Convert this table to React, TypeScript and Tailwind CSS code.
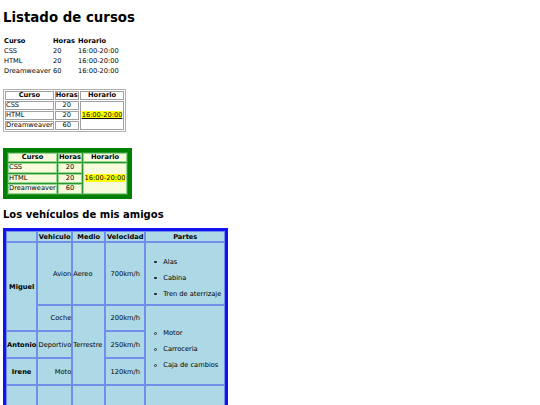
const cursos = [
  { curso: "CSS", horas: 20 },
  { curso: "HTML", horas: 20 },
  { curso: "Dreamweaver", horas: 60 },
]

function PlainTable() {
  return (
    <table className="mt-0 border-separate border-spacing-[1px]">
      <thead>
        <tr className="leading-[9px]">
          <th className="w-[48px] p-0 text-left font-bold">Curso</th>
          <th className="w-[24px] p-0 text-left font-bold">Horas</th>
          <th className="p-0 text-left font-bold">Horario</th>
        </tr>
      </thead>
      <tbody>
        {cursos.map((c) => (
          <tr key={c.curso} className="leading-[9px]">
            <td className="p-0">{c.curso}</td>
            <td className="p-0">{c.horas}</td>
            <td className="p-0">16:00-20:00</td>
          </tr>
        ))}
      </tbody>
    </table>
  )
}

function BorderedTable() {
  return (
    <table className="mt-[12px] border-separate border-spacing-[1px] border border-[#b0b0b0] leading-[7px]">
      <thead>
        <tr>
          <th className="border border-[#a0a0a0] px-[1px] py-0 text-center font-bold">Curso</th>
          <th className="border border-[#a0a0a0] px-[0px] py-0 text-center font-bold">Horas</th>
          <th className="border border-[#a0a0a0] px-[1px] py-0 text-center font-bold">Horario</th>
        </tr>
      </thead>
      <tbody>
        {cursos.map((c, i) => (
          <tr key={c.curso}>
            <td className="border border-[#a0a0a0] px-0 py-0">{c.curso}</td>
            <td className="border border-[#a0a0a0] px-0 py-0 text-center">{c.horas}</td>
            {i === 0 && (
              <td rowSpan={3} className="border border-[#a0a0a0] px-[1px] py-0 text-center">
                <span className="bg-[#ffff00] underline">16:00-20:00</span>
              </td>
            )}
          </tr>
        ))}
      </tbody>
    </table>
  )
}

function GreenTable() {
  return (
    <table className="mt-[16px] border-separate border-spacing-[1px] border-[4px] border-[#008000] bg-[#2f962f] leading-[7.5px]">
      <thead>
        <tr>
          <th className="w-[49px] border border-[#94d894] bg-[#f7fadb] px-[1px] py-0 text-center font-bold">Curso</th>
          <th className="w-[24px] border border-[#94d894] bg-[#f7fadb] px-0 py-0 text-center font-bold">Horas</th>
          <th className="w-[44px] border border-[#94d894] bg-[#f7fadb] px-0 py-0 text-center font-bold">Horario</th>
        </tr>
      </thead>
      <tbody>
        {cursos.map((c, i) => (
          <tr key={c.curso}>
            <td className="border border-[#94d894] bg-[#f7fadb] px-0 py-0">{c.curso}</td>
            <td className="border border-[#94d894] bg-[#f7fadb] px-0 py-0 text-center">{c.horas}</td>
            {i === 0 && (
              <td rowSpan={3} className="border border-[#94d894] bg-[#f7fadb] px-0 py-0 text-center">
                <span className="bg-[#ffff00]">16:00-20:00</span>
              </td>
            )}
          </tr>
        ))}
      </tbody>
    </table>
  )
}

const cell = "border border-[#6f8fea] bg-[#add8e6] px-0 py-0"

function Partes({ items, circle }: { items: string[]; circle?: boolean }) {
  return (
    <ul className="my-[6.67px] list-none pl-[17px]">
      {items.map((it) => (
        <li key={it} className="relative pt-[8px] leading-[8px]">
          {circle ? (
            <span className="absolute top-[10.5px] left-[-9px] h-[3px] w-[3px] rounded-full border-[0.8px] border-[#333]" />
          ) : (
            <span className="absolute top-[11px] left-[-9px] h-[2.5px] w-[2.5px] rounded-full bg-[#222]" />
          )}
          {it}
        </li>
      ))}
    </ul>
  )
}

function VehiculosTable() {
  return (
    <table className="border-separate border-spacing-0 border-[3px] border-[#1212f5] bg-[#6f8fea] leading-[8px]">
      <thead>
        <tr className="h-[11px]">
          <th className={`${cell} w-[31px]`}></th>
          <th className={`${cell} w-[35px] font-bold`}>Vehiculo</th>
          <th className={`${cell} w-[33px] font-bold`}>Medio</th>
          <th className={`${cell} w-[40px] font-bold`}>Velocidad</th>
          <th className={`${cell} w-[80px] font-bold`}>Partes</th>
        </tr>
      </thead>
      <tbody>
        <tr>
          <th rowSpan={2} className={`${cell} font-bold`}>Miguel</th>
          <td className={`${cell} text-right`}>Avion</td>
          <td className={`${cell} text-left`}>Aereo</td>
          <td className={`${cell} text-center`}>700km/h</td>
          <td className={`${cell} text-left`}>
            <Partes items={["Alas", "Cabina", "Tren de aterrizaje"]} />
          </td>
        </tr>
        <tr className="h-[26px]">
          <td className={`${cell} text-right`}>Coche</td>
          <td rowSpan={3} className={`${cell} text-left`}>Terrestre</td>
          <td className={`${cell} text-center`}>200km/h</td>
          <td rowSpan={3} className={`${cell} text-left`}>
            <Partes items={["Motor", "Carroceria", "Caja de cambios"]} circle />
          </td>
        </tr>
        <tr className="h-[27px]">
          <th className={`${cell} font-bold`}>Antonio</th>
          <td className={`${cell} text-right`}>Deportivo</td>
          <td className={`${cell} text-center`}>250km/h</td>
        </tr>
        <tr className="h-[27px]">
          <th className={`${cell} font-bold`}>Irene</th>
          <td className={`${cell} text-right`}>Moto</td>
          <td className={`${cell} text-center`}>120km/h</td>
        </tr>
        <tr className="h-[64px]">
          <th className={cell}></th>
          <td className={cell}></td>
          <td className={cell}></td>
          <td className={cell}></td>
          <td className={cell}></td>
        </tr>
      </tbody>
    </table>
  )
}

export default function App() {
  return (
    <div className="min-h-[405px] bg-white p-[3px] font-['DejaVu_Sans',sans-serif] text-[6.67px] leading-[7.75px] text-black">
      <h1 className="mt-[7px] mb-[10px] text-[13.33px] font-bold leading-[15.5px]">Listado de cursos</h1>
      <PlainTable />
      <BorderedTable />
      <GreenTable />
      <h2 className="mt-[10px] mb-[8px] text-[10px] font-bold leading-[11.64px]">Los vehículos de mis amigos</h2>
      <VehiculosTable />
    </div>
  )
}
